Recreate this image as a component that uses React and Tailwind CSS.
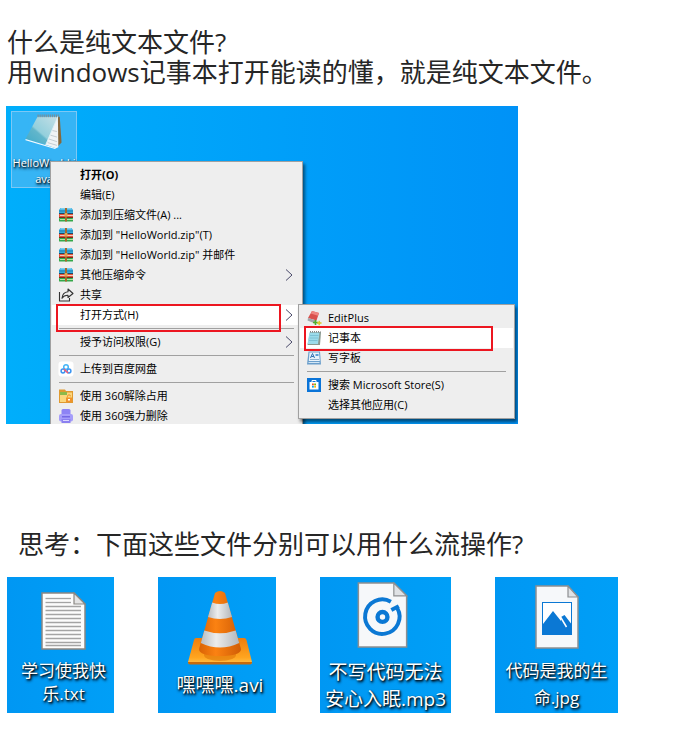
import clsx from "clsx";

const FONT = "font-['Open_Sans','Noto_Sans_CJK_SC',sans-serif]";
const LABEL_SHADOW = "[text-shadow:1px_1px_2px_#000,1px_2px_3px_#001a33]";

/* ---------- small menu icons ---------- */

function ArchiveIcon() {
  return (
    <svg viewBox="0 0 16 16" className="h-4 w-4" aria-hidden="true">
      <path d="M2.500 1h11L15 3v3.500H1V3z" fill="#36a9dc" />
      <path d="M3 1h10l1 1.500H2z" fill="#7ad0f0" />
      <path d="M1 4h14" stroke="#2384b4" />
      <rect x="1" y="6" width="14" height="1" fill="#1c4b66" />
      <rect x="1" y="7" width="14" height="3" fill="#e0533a" />
      <rect x="2" y="8" width="13" height="1" fill="#f2c9b8" />
      <rect x="1" y="10" width="14" height="1" fill="#7c2a1e" />
      <rect x="1" y="11" width="14" height="3.500" rx=".5" fill="#35a84a" />
      <rect x="2" y="12" width="13" height="1" fill="#b4e3a6" />
      <rect x="7" y="1" width="2" height="13.500" fill="#a5682a" />
      <rect x="6.500" y="6" width="3" height="3.500" rx=".5" fill="#dfa450" />
    </svg>
  );
}

function ShareIcon() {
  return (
    <svg viewBox="0 0 16 16" className="h-4 w-4" fill="none" stroke="#333" strokeWidth="1.1" strokeLinejoin="round" aria-hidden="true">
      <path d="M1.500 5v9h10v-3" />
      <path d="M10 2 15 6.500 10 10.500V8.300C7 8.200 5.300 9.200 4 11.300 4.300 7.500 6.300 5 10 4.700z" />
    </svg>
  );
}

function CloudDiskIcon() {
  return (
    <svg viewBox="0 0 16 16" className="h-4 w-4" fill="none" aria-hidden="true">
      <rect x=".5" y=".5" width="15" height="15" rx="3" fill="#fff" />
      <circle cx="8" cy="6" r="2.300" stroke="#45b5f7" strokeWidth="1.500" />
      <circle cx="5" cy="10" r="1.900" stroke="#3b95f2" strokeWidth="1.500" />
      <circle cx="11" cy="10" r="1.900" stroke="#3b95f2" strokeWidth="1.500" />
      <path d="M6.300 8.600 9.700 11.600" stroke="#ef5d78" strokeWidth="1.500" strokeLinecap="round" />
    </svg>
  );
}

function UnlockFolderIcon() {
  return (
    <svg viewBox="0 0 16 16" className="h-4 w-4" aria-hidden="true">
      <path d="M1 1.500h6l1 1.500h7v12H1z" fill="#e09a30" />
      <rect x="2" y="4.500" width="12" height="9.500" fill="#fbd77c" />
      <rect x="2" y="4" width="7" height="3" fill="#8cb94a" />
      <rect x="8" y="9.500" width="6" height="4.500" fill="#f0932b" />
      <path d="M9.500 9.500V8.300a1.500 1.500 0 0 1 3 0" fill="none" stroke="#f0932b" />
      <rect x="10" y="11" width="2" height="1.500" fill="#fff" />
    </svg>
  );
}

function ShredIcon() {
  return (
    <svg viewBox="0 0 16 16" className="h-4 w-4" aria-hidden="true">
      <rect x="3.500" y="1" width="9" height="7" rx="1.500" fill="#8d83f5" />
      <rect x="1" y="6" width="14" height="7.500" rx="2" fill="#a59dfa" />
      <rect x="4" y="8" width="8" height="1.500" fill="#7468e6" />
      <path d="M3.500 11h9v4h-9z" fill="#8b80f0" />
      <path d="M5 12.500h6" stroke="#dcd9ff" />
    </svg>
  );
}

function EditPlusIcon() {
  return (
    <svg viewBox="0 0 16 16" className="h-4 w-4" aria-hidden="true">
      <path d="M6 1 13 3 10.500 10.500 2 8z" fill="#d9514e" />
      <path d="M6 1 13 3 12 5.800 4.800 3.500z" fill="#ee8581" />
      <path d="M2 8 10.500 10.500 9 13.500 1.500 10.500z" fill="#a3a5ab" />
      <path d="M7 12.500h5M9.500 10v5" stroke="#4fae2b" strokeWidth="1.600" />
      <path d="M11 13h4.500M13.200 10.800v4.500" stroke="#d9c423" strokeWidth="1.400" />
    </svg>
  );
}

function NotepadSmallIcon() {
  return (
    <svg viewBox="0 0 16 16" className="h-4 w-4" aria-hidden="true">
      <path d="M4 2h11l-1 13H1.500z" fill="#8a9a90" />
      <path d="M3.500 2.500H13.500L12 14H1.500z" fill="#9bdbea" />
      <path d="M4 5.500h8.500M3.500 8h8.500M3 10.500h8.500" stroke="#7cc2d5" />
      <path d="M4 1.800h10.500" stroke="#888" strokeWidth="1.500" strokeDasharray="1 1" />
    </svg>
  );
}

function WordpadIcon() {
  return (
    <svg viewBox="0 0 16 16" className="h-4 w-4" aria-hidden="true">
      <path d="M2.500 1.500H14L15 14.500H1z" fill="#6a9ecb" />
      <path d="M3.500 2.500H13l.8 8.500H2.800z" fill="#e9f3fb" />
      <path d="M4.500 8 6.500 3.500 8.500 8M5.300 6.500h2.500" fill="none" stroke="#2d6fb3" />
      <rect x="9.500" y="4" width="3" height="2" fill="#5b9bd5" />
      <path d="M4 9.500h9" stroke="#8fb1cf" />
      <rect x="2.500" y="12" width="11" height="1" fill="#d3e6f5" />
    </svg>
  );
}

function StoreIcon() {
  return (
    <svg viewBox="0 0 16 16" className="h-4 w-4" aria-hidden="true">
      <rect x="1" y="1" width="14" height="14" fill="#0a74d8" />
      <path d="M6 5V3.500h4V5" fill="none" stroke="#fff" />
      <path d="M3.500 5h9v7.500h-9z" fill="#fff" />
      <rect x="6" y="6.500" width="1.800" height="1.800" fill="#f25022" />
      <rect x="8.200" y="6.500" width="1.800" height="1.800" fill="#7fba00" />
      <rect x="6" y="8.800" width="1.800" height="1.800" fill="#00a4ef" />
      <rect x="8.200" y="8.800" width="1.800" height="1.800" fill="#ffb900" />
    </svg>
  );
}

function Chevron() {
  return (
    <svg viewBox="0 0 8 12" className="h-3 w-2" fill="none" stroke="#4a4a6a" aria-hidden="true">
      <path d="M1 .5 7 6 1 11.500" />
    </svg>
  );
}

/* ---------- desktop icons ---------- */

function NotepadIcon() {
  return (
    <svg viewBox="0 0 42 40" className="h-10 w-[42px]" aria-hidden="true">
      <defs>
        <linearGradient id="pad" x1="0" y1="1" x2="1" y2="0">
          <stop offset="0" stopColor="#3fa9c8" />
          <stop offset=".4" stopColor="#62b6cb" />
          <stop offset=".45" stopColor="#93cfdc" />
          <stop offset="1" stopColor="#c6e0e6" />
        </linearGradient>
      </defs>
      <path d="M36 4h2L40 32 34 38z" fill="#86683c" />
      <path d="M36 3 36.500 37 34 38 22 34z" fill="#f0f4f5" />
      <path d="M28 24 35 26M26 28 35 31M25 32 35 35M30 19 35 20" stroke="#b4bfc4" strokeWidth=".8" />
      <path d="M14 4H36L23 34 1 28z" fill="url(#pad)" />
      <path d="M1 28 34 38 33 39 1 29.500z" fill="#f7fbfc" />
      <path d="M36 4 23 34" stroke="#dff1f5" />
      <path d="M14 3h23" stroke="#7f8b90" strokeWidth="3" strokeDasharray="1.200 1" />
    </svg>
  );
}

function TextFileIcon() {
  const rows = [6, 10, 14, 18, 22, 26, 30, 34, 38, 42, 46, 50, 53];
  return (
    <svg viewBox="0 0 45 58" className="h-[58px] w-[45px]" aria-hidden="true">
      <path d="M1 1h32l11 11v45H1z" fill="#fcfcfc" stroke="#8a8783" strokeWidth="1.500" />
      {rows.map((y) => (
        <path key={y} d={`M4.500 ${y}.500H${y < 12 ? 30 : 40}`} stroke="#a4a4a4" strokeWidth="1.300" />
      ))}
      <path d="M33 1v11h11z" fill="#e4e4e4" stroke="#8a8783" strokeWidth="1.200" />
    </svg>
  );
}

function ConeIcon() {
  return (
    <svg viewBox="0 0 64 74" className="h-[74px] w-16" aria-hidden="true">
      <defs>
        <linearGradient id="base" x1="0" y1="0" x2="0" y2="1">
          <stop offset="0" stopColor="#ee7d0c" />
          <stop offset=".75" stopColor="#ffa51f" />
          <stop offset="1" stopColor="#ffc24a" />
        </linearGradient>
        <linearGradient id="orange" x1="0" x2="1">
          <stop offset="0" stopColor="#d96205" />
          <stop offset=".4" stopColor="#fb8212" />
          <stop offset="1" stopColor="#d05c05" />
        </linearGradient>
        <linearGradient id="silver" x1="0" x2="1">
          <stop offset="0" stopColor="#b9bcc0" />
          <stop offset=".4" stopColor="#eceded" />
          <stop offset="1" stopColor="#b4b7ba" />
        </linearGradient>
      </defs>
      <path d="M8 47h48q2 0 2.500 2L64 71q0 2-2 2H2q-2 0-2-2l6-22q.5-2 2-2z" fill="url(#base)" />
      <path d="M0 71h64v.5q0 2-2 2H2q-2 0-2-2z" fill="#c86a0b" />
      <ellipse cx="32" cy="64" rx="16" ry="6" fill="#e07708" opacity=".6" />
      <path d="M27 2Q32-2 37 2L53 58Q53 65 32 65T11 58z" fill="url(#orange)" />
      <path d="M24.200 11.500Q32 14.500 39.800 11.500L44 26Q32 30 20 26z" fill="url(#silver)" />
      <path d="M16.300 39.500Q32 45 47.700 39.500L51.200 52Q32 61 12.800 52z" fill="url(#silver)" />
    </svg>
  );
}

function AudioFileIcon() {
  return (
    <svg viewBox="0 0 51 67" className="h-[67px] w-[51px]" aria-hidden="true">
      <path d="M1 1h36l13 13v52H1z" fill="#f6f8fa" stroke="#8d8f91" strokeWidth="1.500" />
      <path d="M37 1v13h13z" fill="#dfe2e5" stroke="#8d8f91" strokeWidth="1.200" />
      <path d="M34 20A17.500 17.500 0 1 0 40.500 26.500" fill="none" stroke="#0b78d4" strokeWidth="4" />
      <circle cx="25.500" cy="35.500" r="5" fill="none" stroke="#0b78d4" strokeWidth="4.500" />
      <path d="M34.500 28.500 42 24.500" stroke="#0b78d4" strokeWidth="4" />
    </svg>
  );
}

function ImageFileIcon() {
  return (
    <svg viewBox="0 0 44 64" className="h-16 w-11" aria-hidden="true">
      <path d="M1 1h32l10 11v51H1z" fill="#f6f8fa" stroke="#8d8f91" strokeWidth="1.500" />
      <path d="M33 1v11h10z" fill="#dfe2e5" stroke="#8d8f91" strokeWidth="1.200" />
      <rect x="7.500" y="17.500" width="29" height="32" fill="#fff" stroke="#0b78d4" />
      <path d="M8 39 18 26 26 36V32L29.500 30 36 38.500V49H8z" fill="#0b78d4" />
      <path d="M25.500 32 31.500 42" stroke="#fff" strokeWidth="1.500" />
    </svg>
  );
}

/* ---------- menus ---------- */

function MenuItem({ icon, label, bold, arrow, active, mark }) {
  return (
    <li className={clsx("relative flex", active && "bg-white")}>
      <button type="button" className="flex h-5 w-full items-center gap-[6px] pr-2 pl-[6px] text-left hover:bg-white">
        <span className="h-4 w-4 shrink-0">{icon}</span>
        <span className={clsx("flex-1 whitespace-nowrap", bold && "font-bold")}>{label}</span>
        {arrow && <Chevron />}
      </button>
      {mark && <span className={clsx("pointer-events-none absolute border-2 border-[#ec1620]", mark)} />}
    </li>
  );
}

function Separator() {
  return (
    <li role="separator" className="px-[7px] py-[3px]">
      <div className="h-px bg-[#a0a0a0]" />
    </li>
  );
}

function Menu({ items, className }) {
  return (
    <ul className={clsx("absolute border border-[#a0a0a0] bg-[#eee] px-px py-[3px] text-[11px] text-black shadow-[2px_3px_3px_rgba(0,0,0,0.5)]", className)}>
      {items.map((item, i) => (item.sep ? <Separator key={i} /> : <MenuItem key={i} {...item} />))}
    </ul>
  );
}

const contextItems = [
  { label: "打开(O)", bold: true },
  { label: "编辑(E)" },
  { label: "添加到压缩文件(A) ...", icon: <ArchiveIcon /> },
  { label: '添加到 "HelloWorld.zip"(T)', icon: <ArchiveIcon /> },
  { label: '添加到 "HelloWorld.zip" 并邮件', icon: <ArchiveIcon /> },
  { label: "其他压缩命令", icon: <ArchiveIcon />, arrow: true },
  { label: "共享", icon: <ShareIcon /> },
  { label: "打开方式(H)", arrow: true, active: true, mark: "-top-px -bottom-[7px] left-1 right-5" },
  { sep: true },
  { label: "授予访问权限(G)", arrow: true },
  { sep: true },
  { label: "上传到百度网盘", icon: <CloudDiskIcon /> },
  { sep: true },
  { label: "使用 360解除占用", icon: <UnlockFolderIcon /> },
  { label: "使用 360强力删除", icon: <ShredIcon /> },
];

const openWithItems = [
  { label: "EditPlus", icon: <EditPlusIcon /> },
  { label: "记事本", icon: <NotepadSmallIcon />, active: true, mark: "-top-[2px] -bottom-[3px] left-1 right-5" },
  { label: "写字板", icon: <WordpadIcon /> },
  { sep: true },
  { label: "搜索 Microsoft Store(S)", icon: <StoreIcon /> },
  { label: "选择其他应用(C)" },
];

function Desktop() {
  return (
    <section className="relative h-[318px] w-full max-w-[512px] overflow-hidden bg-linear-to-r from-[#00aefb] to-[#0092f7]">
      <div className="absolute top-[5px] left-[5px] flex h-[77px] w-[66px] flex-col items-center border border-[#7cc8f5] bg-[#4db8f2]/70 pt-px">
        <NotepadIcon />
        <span className={clsx("mt-[5px] block text-center text-[11px] leading-4 text-white", LABEL_SHADOW)}>
          HelloWorld.j
          <br />
          ava
        </span>
      </div>
      <Menu items={contextItems} className="top-[55px] left-11 w-[253px]" />
      <Menu items={openWithItems} className="top-[198px] left-[292px] w-[217px]" />
    </section>
  );
}

/* ---------- file tiles ---------- */

const files = [
  { lines: ["学习使我快", "乐.txt"], icon: <TextFileIcon />, box: "w-[107px] pt-[15px] pl-[6px]", text: "mt-[9px] text-[17px] leading-[23px]" },
  { lines: ["嘿嘿嘿.avi"], icon: <ConeIcon />, box: "w-[118px] pt-[14px] pl-[6px]", text: "mt-[7px] text-[19px] leading-[27px]" },
  { lines: ["不写代码无法", "安心入眠.mp3"], icon: <AudioFileIcon />, box: "w-[131px] pt-[5px] pr-[6px]", text: "mt-[11px] pl-[6px] text-[19px] leading-[27px]" },
  { lines: ["代码是我的生", "命.jpg"], icon: <ImageFileIcon />, box: "w-[123px] pt-2", text: "mt-[8px] text-[17px] leading-[27px]" },
];

function FileTile({ lines, icon, box, text }) {
  return (
    <figure className={clsx("flex h-[136px] flex-col items-center overflow-hidden bg-linear-to-r from-[#0097f3] to-[#009ff7]", box)}>
      {icon}
      <figcaption className={clsx("text-center whitespace-nowrap text-white", LABEL_SHADOW, text)}>
        {lines.map((line) => (
          <span key={line} className="block">{line}</span>
        ))}
      </figcaption>
    </figure>
  );
}

export default function App() {
  return (
    <main className={clsx("bg-white px-[6px] pt-[27px] pb-5 text-[#262626]", FONT)}>
      <h1 className="pl-px text-[26px] leading-[30px]">
        <span className="block">什么是纯文本文件?</span>
        <span className="block">用windows记事本打开能读的懂，就是纯文本文件。</span>
      </h1>
      <div className="mt-[19px]">
        <Desktop />
      </div>
      <h2 className="mt-[105px] pl-3 text-[26px] leading-[30px]">思考：下面这些文件分别可以用什么流操作?</h2>
      <div className="mt-[18px] flex flex-wrap gap-[44px] pl-px">
        {files.map((file) => (
          <FileTile key={file.lines[0]} {...file} />
        ))}
      </div>
    </main>
  );
}
